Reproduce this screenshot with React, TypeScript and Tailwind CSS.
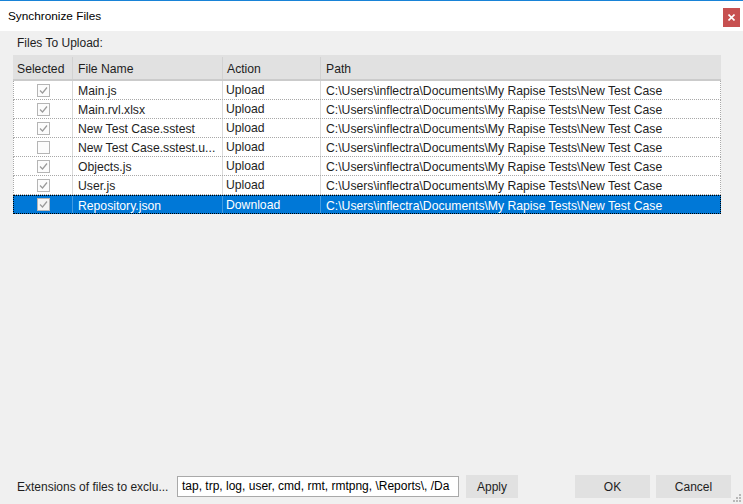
import React from "react";

const PATH = "C:\\Users\\inflectra\\Documents\\My Rapise Tests\\New Test Case";

const rows = [
  { sel: true, name: "Main.js", action: "Upload" },
  { sel: true, name: "Main.rvl.xlsx", action: "Upload" },
  { sel: true, name: "New Test Case.sstest", action: "Upload" },
  { sel: false, name: "New Test Case.sstest.u...", action: "Upload" },
  { sel: true, name: "Objects.js", action: "Upload" },
  { sel: true, name: "User.js", action: "Upload" },
  { sel: true, name: "Repository.json", action: "Download", active: true },
];

function Check({ checked, active }: { checked: boolean; active?: boolean }) {
  return (
    <div
      className={`w-[13px] h-[13px] border border-[#b5b5b5] flex items-center justify-center ${
        active ? "bg-[#f4f4f4]" : "bg-[#fcfcfc]"
      }`}
    >
      {checked && (
        <svg width="11" height="11" viewBox="0 0 11 11">
          <path d="M2 5.5 L4.5 8 L9 2.5" fill="none" stroke="#9a9a9a" strokeWidth="1.2" />
        </svg>
      )}
    </div>
  );
}

export default function App() {
  return (
    <div
      className="w-[743px] h-[504px] bg-[#f0f0f0] flex flex-col overflow-hidden text-[12px] text-[#1e1e1e]"
      style={{ fontFamily: '"Liberation Sans", Arial, sans-serif' }}
    >
      {/* title bar */}
      <div className="h-[31px] bg-white border-t border-[#1883d7] flex items-start shrink-0">
        <div className="pl-[8px] pt-[7px] text-black leading-[16px] text-[11.8px]">Synchronize Files</div>
        <div className="ml-auto mr-[3px] mt-[7px] w-[17px] h-[19px] bg-[#c75050] flex items-center justify-center">
          <svg width="7" height="7" viewBox="0 0 7 7">
            <path d="M0.5 0.5 L6.5 6.5 M6.5 0.5 L0.5 6.5" stroke="white" strokeWidth="1.6" />
          </svg>
        </div>
      </div>

      <div className="pl-[17px] pt-[5px] h-[24px] leading-[14px]">Files To Upload:</div>

      {/* table */}
      <div className="ml-[13px] w-[708px] flex flex-col text-[12.2px]">
        <div className="flex h-[26px] bg-[#e1e1e1] border-b-2 border-[#cbcbcb] leading-[24px] pt-[2px]">
          <div className="w-[59px] pl-[4px]">Selected</div>
          <div className="w-[150px] pl-[5px] border-l border-[#d2d2d2]">File Name</div>
          <div className="w-[98px] pl-[4px] border-l border-[#d2d2d2]">Action</div>
          <div className="flex-1 pl-[5px] border-l border-[#d2d2d2]">Path</div>
        </div>
        {rows.map((r, i) => (
          <div
            key={i}
            className={`flex h-[19px] leading-[17px] border-dotted ${
              r.active
                ? "bg-[#0078d7] text-white border border-black"
                : "bg-white border-l border-r border-b border-[#a8a8a8]"
            }`}
          >
            <div className="w-[58px] flex items-center justify-center">
              <Check checked={r.sel} active={r.active} />
            </div>
            <div
              className={`w-[150px] pl-[5px] border-l border-solid ${
                r.active ? "border-[#3f9ae2]" : "border-[#dadada]"
              } whitespace-nowrap overflow-hidden pt-[2px]`}
            >
              {r.name}
            </div>
            <div
              className={`w-[98px] pl-[3px] border-l border-solid ${
                r.active ? "border-[#3f9ae2]" : "border-[#dadada]"
              } pt-[1px]`}
            >
              {r.action}
            </div>
            <div
              className={`flex-1 pl-[5px] border-l border-solid ${
                r.active ? "border-[#3f9ae2]" : "border-[#dadada]"
              } whitespace-nowrap overflow-hidden pt-[2px]`}
            >
              {PATH}
            </div>
          </div>
        ))}
      </div>

      <div className="flex-1" />

      {/* bottom bar */}
      <div className="h-[28px] flex items-start">
        <div className="ml-[17px] w-[160px] pt-[4px] leading-[14px] whitespace-nowrap">
          Extensions of files to exclu...
        </div>
        <div className="w-[282px] h-[21px] bg-white border border-[#a9a9a9] pl-[4px] leading-[19px] whitespace-nowrap overflow-hidden text-black">
          tap, trp, log, user, cmd, rmt, rmtpng, \Reports\, /Da
        </div>
        <div className="ml-[7px] -mt-[1px] w-[52px] h-[23px] bg-[#e1e1e1] flex items-center justify-center">
          Apply
        </div>
        <div className="ml-[57px] -mt-[1px] w-[75px] h-[23px] bg-[#e1e1e1] flex items-center justify-center">
          OK
        </div>
        <div className="ml-[6px] -mt-[1px] w-[75px] h-[23px] bg-[#e1e1e1] flex items-center justify-center">
          Cancel
        </div>
        <div className="ml-auto self-end mb-[1px] mr-[1px]">
          <svg width="10" height="10" viewBox="0 0 10 10">
            <rect x="7" y="1" width="2" height="2" fill="#b8b8b8" />
            <rect x="4" y="4" width="2" height="2" fill="#b8b8b8" />
            <rect x="7" y="4" width="2" height="2" fill="#b8b8b8" />
            <rect x="1" y="7" width="2" height="2" fill="#b8b8b8" />
            <rect x="4" y="7" width="2" height="2" fill="#b8b8b8" />
            <rect x="7" y="7" width="2" height="2" fill="#b8b8b8" />
          </svg>
        </div>
      </div>
    </div>
  );
}
